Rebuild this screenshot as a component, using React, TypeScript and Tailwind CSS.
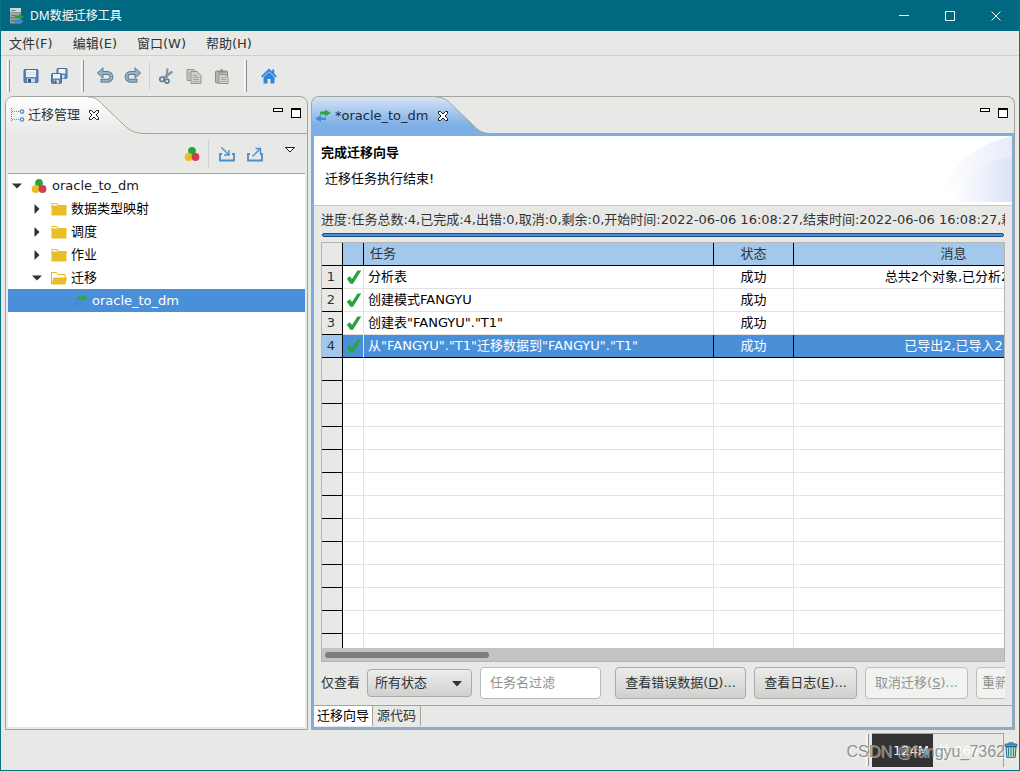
import React from "react";

type IconProps = { className?: string };

const FloppyIcon = ({ className = "" }: IconProps) => (
  <svg viewBox="0 0 16 16" className={`size-4 ${className}`}>
    <rect x="1" y="1.5" width="14" height="13" rx="1" fill="#5a85b8" stroke="#476c9c" />
    <rect x="3" y="2" width="10" height="7" fill="#eef3f8" />
    <path d="M3 4.5h10M3 6.5h10" stroke="#d3dde8" />
    <rect x="4" y="10.5" width="8" height="4" fill="#cfd9e4" />
    <rect x="5" y="11" width="3" height="3.5" fill="#3b5378" />
  </svg>
);

const FloppiesIcon = () => (
  <svg viewBox="0 0 18 18" className="size-[18px]">
    {[[6.5, 1], [1, 6]].map(([x, y]) => (
      <g key={x} transform={`translate(${x} ${y})`}>
        <rect x="0.5" y="0.5" width="10" height="10" rx="1" fill="#5a85b8" stroke="#476c9c" />
        <rect x="2" y="1" width="7" height="4.5" fill="#eef3f8" />
        <rect x="3" y="7" width="5" height="3.5" fill="#cfd9e4" />
        <rect x="3.5" y="7.5" width="2" height="3" fill="#3b5378" />
      </g>
    ))}
  </svg>
);

const UndoIcon = ({ className = "" }: IconProps) => (
  <svg viewBox="0 0 18 18" className={`size-[18px] ${className}`}>
    <path d="M4 6h7.500a3.900 3.900 0 0 1 0 7.800H4.500" fill="none" stroke="#5f7f94" strokeWidth="4" />
    <path d="M7 .8 1.300 6 7 11.200z" fill="#8fb0c4" stroke="#5f7f94" />
    <path d="M4.500 6h7a3.900 3.900 0 0 1 0 7.800H5.500" fill="none" stroke="#94b2c4" strokeWidth="2" />
  </svg>
);

const CutIcon = () => (
  <svg viewBox="0 0 16 16" className="size-4" fill="none">
    <path d="M9.500 .5 8.500 10M14.500 3.500 5.500 10" stroke="#87929a" strokeWidth="2.200" />
    <circle cx="4" cy="11.300" r="2.200" stroke="#5f7f96" strokeWidth="1.700" />
    <circle cx="9" cy="13.200" r="2" stroke="#5f7f96" strokeWidth="1.700" />
  </svg>
);

const CopyIcon = () => (
  <svg viewBox="0 0 16 16" className="size-4">
    <path d="M1 1.500h7l2 2v9H1z" fill="#cfcfc9" stroke="#96978f" />
    <path d="M5 3.500h6l4 4v8H5z" fill="#cfcfc9" stroke="#96978f" />
    <path d="M7 7.500h4M7 9.500h6M7 11.500h6M7 13.500h6M3 4v7" stroke="#a4a59e" />
  </svg>
);

const PasteIcon = () => (
  <svg viewBox="0 0 16 16" className="size-4">
    <rect x="1.500" y="3" width="12" height="12" rx="1" fill="#bdb2a2" stroke="#928a80" />
    <path d="M4 4.500V3h2l1-2h1l1 2h2v1.500z" fill="#8d8f8e" />
    <path d="M5 6.500h6l3 2.500v6.500H5z" fill="#d3d2cc" stroke="#96978f" />
    <path d="M7 9.500h5M7 11.500h5M7 13.500h5" stroke="#a4a59e" />
  </svg>
);

const HomeIcon = () => (
  <svg viewBox="0 0 16 16" className="size-4">
    <path d="M8 .5 0 8.300l1.300 1.300L8 3.200l6.700 6.400L16 8.300l-2.800-2.700V1.500h-2v2.100z" fill="#2e86dc" />
    <path d="M8 4 2.500 9.200V15.500h4v-4.500h3v4.500h4V9.200z" fill="#2e86dc" />
  </svg>
);

const BallsIcon = () => (
  <svg viewBox="0 0 16 16" className="size-4 shrink-0">
    <circle cx="8" cy="5" r="3.900" fill="#2ba43d" />
    <circle cx="4.600" cy="11" r="3.900" fill="#e6bd28" />
    <circle cx="11.500" cy="11" r="3.900" fill="#d03c50" />
  </svg>
);

const TrayIcon = ({ out = false }: { out?: boolean }) => (
  <svg viewBox="0 0 16 16" className="size-4" fill="none" stroke="#4a8fcb">
    <path d="M3 8H1v6.500h14V8h-2" strokeWidth="1.800" />
    {out ? (
      <path d="M5.500 10.500 13 3M8.500 2.500h5v5" strokeWidth="1.400" />
    ) : (
      <path d="M2.500 1.500 9.500 8.500M10 4v5H5" strokeWidth="1.400" />
    )}
  </svg>
);

const FolderIcon = ({ open = false }: { open?: boolean }) => (
  <svg viewBox="0 0 16 16" className="size-4 shrink-0">
    {open ? (
      <>
        <path d="M.5 14V2.500h5l1.500 2h7V8" fill="#fff" stroke="#e0b62c" />
        <path d="M2.500 7.500H16L14.500 14.500H.5z" fill="#e8bf27" />
      </>
    ) : (
      <>
        <path d="M.5 2h5.500l1.500 2H15.500v3H.5z" fill="#e8bf27" />
        <path d="M1.500 3h4l1 1.500h-5z" fill="#fff" />
        <path d="M.5 5h15v9.500H.5z" fill="#e8bf27" />
      </>
    )}
  </svg>
);

const TransferIcon = () => (
  <svg viewBox="0 0 16 16" className="size-4 shrink-0">
    <path d="M5 3.500h5V1.500l6 3.500-6 3.500V6.500H5z" fill="#2ea545" />
    <path d="M11 9.500H6V7L0 10.500l6 3.500v-2H11z" fill="#3a8ee0" />
  </svg>
);

const CheckIcon = () => (
  <svg viewBox="0 0 16 16" className="block size-4">
    <path d="M.8 9.500 4 7.300l2 2.600L11.500 1.500h3.800L7 14.800H4.200z" fill="#27a53c" />
  </svg>
);

const TreeTabIcon = () => (
  <svg viewBox="0 0 16 16" className="size-4 shrink-0" fill="none" stroke="#4a90d0">
    <path d="M1.500 1v14M2 4.500h8M2 12.500h8" strokeDasharray="1 1" />
    <circle cx="12" cy="4.500" r="1.700" strokeWidth="1.300" />
    <circle cx="12" cy="12.500" r="1.700" strokeWidth="1.300" />
  </svg>
);

const CloseGlyph = () => (
  <svg viewBox="0 0 12 12" className="size-3">
    <path
      d="M1.500 1.500h2L6 4l2.500-2.500h2v2L8 6l2.500 2.500v2h-2L6 8l-2.500 2.500h-2v-2L4 6 1.500 3.500z"
      fill="#fff"
      stroke="#1a1a1a"
    />
  </svg>
);

const AppIcon = () => (
  <svg viewBox="0 0 16 16" className="size-4">
    <rect x="2" y="0" width="11" height="4.500" fill="#d4d6d6" />
    <rect x="2" y="5" width="11" height="4.500" fill="#a3a9aa" />
    <rect x="2" y="10" width="11" height="5.500" fill="#8f9899" />
    <path d="M3.500 2.500h4M3.500 7.500h4M3.500 12.500h3" stroke="#6a7374" />
    <path d="M7 7.500h4V5.500L16 9l-5 3V10H7z" fill="#1f9c4c" />
    <path d="M15 12H9.500V10.500L5.500 13.200l4 2.600V14.500H15z" fill="#3f86cf" />
  </svg>
);

const TrashIcon = () => (
  <svg viewBox="0 0 14 16" className="h-4 w-[14px]">
    <path d="M5 2V.8h4V2" fill="none" stroke="#1c6a92" />
    <rect x="1" y="2" width="12" height="2.500" rx="1" fill="#4aa3c4" stroke="#1c6a92" />
    <path d="M2 5h10l-.8 10.300H2.800z" fill="#bfe0b8" stroke="#1c6a92" />
    <path d="M4.500 6v8M7 6v8M9.500 6v8" stroke="#2a7da3" />
  </svg>
);

function PaneButtons() {
  return (
    <div className="ml-auto flex items-start gap-2 pt-[11px] pr-1.5">
      <button aria-label="最小化窗格" className="h-1 w-[10px] border border-black bg-white" />
      <button aria-label="最大化窗格" className="size-[10px] border border-t-2 border-black bg-white" />
    </div>
  );
}

function ToolButton({ label, children }: { label: string; children: React.ReactNode }) {
  return (
    <button aria-label={label} className="flex h-7 w-7 items-center justify-center">
      {children}
    </button>
  );
}

const Grip = () => <span className="h-8 w-[3px] border-r border-l border-l-white border-r-[#8f9190]" />;

function Arrow({ open }: { open: boolean }) {
  return (
    <svg viewBox="0 0 10 10" className="size-[10px] shrink-0" fill="#2e3436">
      {open ? <path d="M0 2.500h10L5 7.500z" /> : <path d="M2.500 0v10L7.500 5z" />}
    </svg>
  );
}

const folders = [
  { name: "数据类型映射", open: false },
  { name: "调度", open: false },
  { name: "作业", open: false },
  { name: "迁移", open: true },
];

function Explorer() {
  return (
    <section className="flex w-[303px] shrink-0 flex-col overflow-hidden rounded-t-lg border border-[#a3a59c]">
      <header className="relative flex h-[37px] shrink-0 border-b border-[#a3a59c]">
        <svg viewBox="0 0 140 37" className="absolute top-0 left-0 h-[37px] w-[140px]">
          <defs>
            <linearGradient id="paneTab" x1="0" y1="0" x2="0" y2="1">
              <stop offset="0" stopColor="#ffffff" />
              <stop offset="1" stopColor="#e8e8e6" />
            </linearGradient>
          </defs>
          <path d="M0 37V0H82C89 0 92 3 96 7L118 28C124 34 129 36.500 140 36.500V37z" fill="url(#paneTab)" />
          <path d="M82 0C89 0 92 3 96 7L118 28C124 34 129 36.500 140 36.500" fill="none" stroke="#a3a59c" />
        </svg>
        <div className="relative flex items-center gap-0.5 pl-1">
          <TreeTabIcon />
          <span className="text-[#2e3436]">迁移管理</span>
          <button aria-label="关闭迁移管理" className="ml-1.5">
            <CloseGlyph />
          </button>
        </div>
        <PaneButtons />
      </header>
      <div className="flex h-[39px] shrink-0 items-center justify-end pr-[11px]">
        <ToolButton label="分组">
          <BallsIcon />
        </ToolButton>
        <span className="mr-1 ml-0.5 h-7 w-px bg-[#d0d1cf]" />
        <ToolButton label="导入">
          <TrayIcon />
        </ToolButton>
        <ToolButton label="导出">
          <TrayIcon out />
        </ToolButton>
        <button aria-label="视图菜单" className="mb-2 ml-[15px]">
          <svg viewBox="0 0 12 8" className="h-2 w-3">
            <path d="M1.500 1.500h9L6 6z" fill="#fff" stroke="#1a1a1a" />
          </svg>
        </button>
      </div>
      <div className="mx-0.5 mb-0.5 flex-1 border-t border-[#a3a59c] bg-white text-black" role="tree">
        <div className="flex h-[23px] items-center pl-1" role="treeitem" aria-expanded="true">
          <Arrow open />
          <span className="mr-[5px] ml-[9px]">
            <BallsIcon />
          </span>
          <span className="text-[#1a1a1a]">oracle_to_dm</span>
        </div>
        {folders.map((f) => (
          <div key={f.name} className="flex h-[23px] items-center pl-6" role="treeitem" aria-expanded={f.open}>
            <Arrow open={f.open} />
            <span className="mr-1 ml-[9px]">
              <FolderIcon open={f.open} />
            </span>
            <span>{f.name}</span>
          </div>
        ))}
        <div className="flex h-[23px] items-center gap-1 bg-[#4a90d9] pl-16 text-white" role="treeitem" aria-selected="true">
          <TransferIcon />
          <span>oracle_to_dm</span>
        </div>
      </div>
    </section>
  );
}

const rows = [
  { task: "分析表", status: "成功", message: "总共2个对象,已分析2个" },
  { task: "创建模式FANGYU", status: "成功", message: "" },
  { task: '创建表"FANGYU"."T1"', status: "成功", message: "" },
  { task: '从"FANGYU"."T1"迁移数据到"FANGYU"."T1"', status: "成功", message: "已导出2,已导入2" },
];

function TaskTable() {
  return (
    <div className="flex min-h-0 flex-1 flex-col overflow-hidden border border-[#b4b6b4] bg-white">
      <div className="min-h-0 flex-1 overflow-hidden">
        <table className="w-[792px] table-fixed border-separate border-spacing-0 text-black">
          <colgroup>
            <col className="w-[21px]" />
            <col className="w-[21px]" />
            <col className="w-[350px]" />
            <col className="w-[80px]" />
            <col className="w-[320px]" />
          </colgroup>
          <thead>
            <tr className="h-[23px] bg-[#a4c7ec] text-[#2e3436]">
              <th className="border-r border-b border-black bg-[#e8e8e6] p-0" />
              <th className="border-r border-b border-black p-0" />
              <th className="border-r border-b border-black p-0 pl-1.5 text-left font-normal">任务</th>
              <th className="border-r border-b border-black p-0 font-normal">状态</th>
              <th className="border-r border-b border-black p-0 font-normal">消息</th>
            </tr>
          </thead>
          <tbody>
            {rows.map((r, i) => {
              const selected = i === 3;
              const line = selected ? "border-b-black border-r-black" : "border-[#e2e2e2]";
              const iconLine = selected ? "border-b-black border-r-[#e2e2e2]" : "border-[#e2e2e2]";
              return (
                <tr key={r.task} className={`h-[23px] ${selected ? "bg-[#4a90d9] text-white" : ""}`}>
                  <td
                    className={`border-r border-b border-black p-0 pr-0.5 text-center text-[#2e3436] ${
                      selected ? "bg-[#a4c7ec]" : "bg-[#e8e8e6]"
                    }`}
                  >
                    {i + 1}
                  </td>
                  <td className={`border-r border-b p-0 pl-[3px] ${iconLine}`}>
                    <CheckIcon />
                  </td>
                  <td className={`border-r border-b p-0 pl-1 whitespace-nowrap ${line}`}>{r.task}</td>
                  <td className={`border-r border-b p-0 text-center ${line}`}>{r.status}</td>
                  <td className={`border-r border-b p-0 text-center whitespace-nowrap ${line}`}>{r.message}</td>
                </tr>
              );
            })}
            {Array.from({ length: 13 }, (_, i) => (
              <tr key={i} className="h-[23px]">
                <td className="border-r border-b border-black bg-[#e8e8e6] p-0" />
                <td className="border-r border-b border-[#e2e2e2] p-0" />
                <td className="border-r border-b border-[#e2e2e2] p-0" />
                <td className="border-r border-b border-[#e2e2e2] p-0" />
                <td className="border-r border-b border-[#e2e2e2] p-0" />
              </tr>
            ))}
          </tbody>
        </table>
      </div>
      <div className="flex h-[13px] shrink-0 items-center bg-[#c1c4c2] pl-[3px]">
        <div className="h-1.5 w-[164px] rounded-full bg-[#7a7e7c]" />
      </div>
    </div>
  );
}

const buttonBase = "h-8 shrink-0 rounded border px-[5px] whitespace-nowrap";
const buttonOn = `${buttonBase} border-[#a9aba8] bg-gradient-to-b from-[#ececea] to-[#d0d1ce] text-[#2e3436]`;
const buttonOff = `${buttonBase} border-[#bcbebb] bg-[#f2f2f1] text-[#8f9290]`;

function FilterBar() {
  return (
    <div className="flex h-[43px] shrink-0 items-center overflow-hidden pb-0.5">
      <label htmlFor="status" className="shrink-0 text-[#2e3436]">
        仅查看
      </label>
      <div className="relative ml-[7px] w-[105px] shrink-0">
        <select
          id="status"
          className="block h-7 w-full appearance-none rounded border border-[#a9aba8] bg-gradient-to-b from-[#ececea] to-[#d0d1ce] pl-[7px] text-[#2e3436]"
        >
          <option>所有状态</option>
        </select>
        <svg viewBox="0 0 10 6" className="pointer-events-none absolute top-3 right-2.5 h-1.5 w-2.5" fill="#2e3436">
          <path d="M0 0h10L5 5.500z" />
        </svg>
      </div>
      <input
        aria-label="任务名过滤"
        placeholder="任务名过滤"
        className="ml-2 h-8 w-[121px] shrink-0 rounded border border-[#b9bbb8] bg-white px-[9px] placeholder:text-[#8f9290]"
      />
      <div className="ml-[14px] flex gap-2">
        <button className={`${buttonOn} w-[131px]`}>
          查看错误数据(<u>D</u>)...
        </button>
        <button className={`${buttonOn} w-[103px]`}>
          查看日志(<u>E</u>)...
        </button>
        <button disabled className={`${buttonOff} w-[103px]`}>
          取消迁移(<u>S</u>)...
        </button>
        <button disabled className={`${buttonOff} w-[95px]`}>
          重新迁移(<u>R</u>)...
        </button>
      </div>
    </div>
  );
}

function Editor() {
  return (
    <section className="flex min-w-0 flex-1 flex-col overflow-hidden rounded-t-lg border border-b-0 border-[#a3a59c]">
      <header className="relative flex h-[36px] shrink-0">
        <svg viewBox="0 0 180 37" className="absolute top-0 left-0 h-[37px] w-[180px]">
          <defs>
            <linearGradient id="editorTab" x1="0" y1="0" x2="0" y2="1">
              <stop offset="0" stopColor="#d6e4f5" />
              <stop offset="0.75" stopColor="#7fb0e6" />
              <stop offset="1" stopColor="#7aaee6" />
            </linearGradient>
          </defs>
          <path d="M0 37V0H124C131 0 135 3 139 7L160 27C167 34 170 36.500 180 36.500V37z" fill="url(#editorTab)" />
          <path d="M124 0C131 0 135 3 139 7L160 27C167 34 170 36.500 180 36.500" fill="none" stroke="#a3a59c" />
        </svg>
        <div className="relative flex items-center gap-1 pt-px pl-[3px]">
          <TransferIcon />
          <span className="text-[#1a2a3c]">*oracle_to_dm</span>
          <button aria-label="关闭 oracle_to_dm" className="ml-1">
            <CloseGlyph />
          </button>
        </div>
        <PaneButtons />
      </header>
      <div className="flex min-h-0 flex-1 flex-col border-2 border-t-[3px] border-b-[3px] border-[#7fadde] border-b-[#8faacb]">
        <div className="relative h-[70px] shrink-0 overflow-hidden border-b border-[#c9cac8] bg-white pt-2 pl-[7px] text-black">
          <svg viewBox="0 0 80 66" className="absolute top-0 right-0 h-[66px] w-20">
            <defs>
              <linearGradient id="banner" x1="0" x2="1" y1="0" y2="0">
                <stop offset="0.15" stopColor="#ffffff" />
                <stop offset="1" stopColor="#dce3f6" />
              </linearGradient>
            </defs>
            <path d="M0 66C16 34 42 8 80 0V66z" fill="url(#banner)" opacity=".7" />
            <path d="M10 66C26 42 48 25 80 22V66z" fill="url(#banner)" />
          </svg>
          <h1 className="relative leading-[18px] font-bold">完成迁移向导</h1>
          <p className="relative mt-2 pl-1 leading-[18px]">迁移任务执行结束!</p>
        </div>
        <div className="flex min-h-0 flex-1 flex-col px-[7px]">
          <div className="h-[27px] shrink-0 overflow-hidden leading-[27px] whitespace-nowrap text-[#2e3436]">
            进度:任务总数:4,已完成:4,出错:0,取消:0,剩余:0,开始时间:2022-06-06 16:08:27,结束时间:2022-06-06 16:08:27,耗时:0
          </div>
          <div
            role="progressbar"
            aria-label="进度"
            aria-valuenow={100}
            className="mx-px mb-[5px] h-1 shrink-0 rounded-sm border border-[#1c4c80] bg-[#4a90d9]"
          />
          <TaskTable />
          <FilterBar />
        </div>
        <div className="flex h-[22px] shrink-0 items-stretch border-t border-[#a3a59c] pb-px">
          <button className="border-r border-[#a3a59c] bg-white px-[3px] text-black">迁移向导</button>
          <button className="border-r border-[#a3a59c] px-1 text-[#2e3436]">源代码</button>
        </div>
      </div>
    </section>
  );
}

export default function App() {
  return (
    <div className="flex h-screen w-full flex-col overflow-hidden border border-t-0 border-[#0c7183] bg-[#e8e8e6] font-['DejaVu_Sans','Noto_Sans_CJK_SC',sans-serif] text-[13px] leading-[18px]">
      <div className="flex h-[31px] shrink-0 items-center bg-[#006880] pl-[7px] text-white">
        <AppIcon />
        <span className="ml-1.5 font-['Noto_Sans','Noto_Sans_CJK_SC',sans-serif] text-xs">DM数据迁移工具</span>
        <div className="ml-auto flex items-center">
          {[
            { label: "最小化", d: "M1 5.500h10" },
            { label: "最大化", d: "M1.500 1.500h9v9h-9z" },
            { label: "关闭", d: "M1.500 1.500l9 9M10.500 1.500l-9 9" },
          ].map((b) => (
            <button key={b.label} aria-label={b.label} className="flex h-7 w-[46px] items-center justify-center">
              <svg viewBox="0 0 12 12" className="size-3" fill="none" stroke="#fff">
                <path d={b.d} />
              </svg>
            </button>
          ))}
        </div>
      </div>

      <nav className="flex h-[25px] shrink-0 items-center gap-5 border-b border-[#cfd0ce] pt-px pl-2 text-[#2e3436]">
        <button>文件(F)</button>
        <button>编辑(E)</button>
        <button>窗口(W)</button>
        <button>帮助(H)</button>
      </nav>

      <div className="flex h-10 shrink-0 items-center pl-1.5">
        <Grip />
        <span className="w-[7px]" />
        <ToolButton label="保存">
          <FloppyIcon />
        </ToolButton>
        <ToolButton label="全部保存">
          <FloppiesIcon />
        </ToolButton>
        <span className="w-2" />
        <Grip />
        <span className="w-[7px]" />
        <ToolButton label="撤销">
          <UndoIcon />
        </ToolButton>
        <ToolButton label="重做">
          <UndoIcon className="-scale-x-100" />
        </ToolButton>
        <span className="mx-0.5 h-7 w-px bg-[#d0d1cf]" />
        <ToolButton label="剪切">
          <CutIcon />
        </ToolButton>
        <ToolButton label="复制">
          <CopyIcon />
        </ToolButton>
        <ToolButton label="粘贴">
          <PasteIcon />
        </ToolButton>
        <span className="w-2" />
        <Grip />
        <span className="w-2" />
        <ToolButton label="主页">
          <HomeIcon />
        </ToolButton>
      </div>

      <main className="flex min-h-0 flex-1 gap-[3px] pr-1 pl-1">
        <Explorer />
        <Editor />
      </main>

      <footer className="relative flex h-10 shrink-0 items-center justify-end">
        <Grip />
        <div className="ml-[3px] flex h-[34px] w-[132px] border-t border-r border-[#a3a59c] text-white">
          <span className="flex w-[61px] items-center justify-end bg-[#333333] pr-1">124M</span>
          <span className="flex items-center pl-1">共 266M</span>
        </div>
        <button aria-label="回收内存" className="pr-px">
          <TrashIcon />
        </button>
        <span className="pointer-events-none absolute right-3.5 bottom-1.5 font-['Liberation_Sans',sans-serif] text-base text-[#858585]/90 [text-shadow:1px_1px_0_rgba(255,255,255,0.5)]">
          CSDN @fangyu_7362
        </span>
      </footer>
    </div>
  );
}
